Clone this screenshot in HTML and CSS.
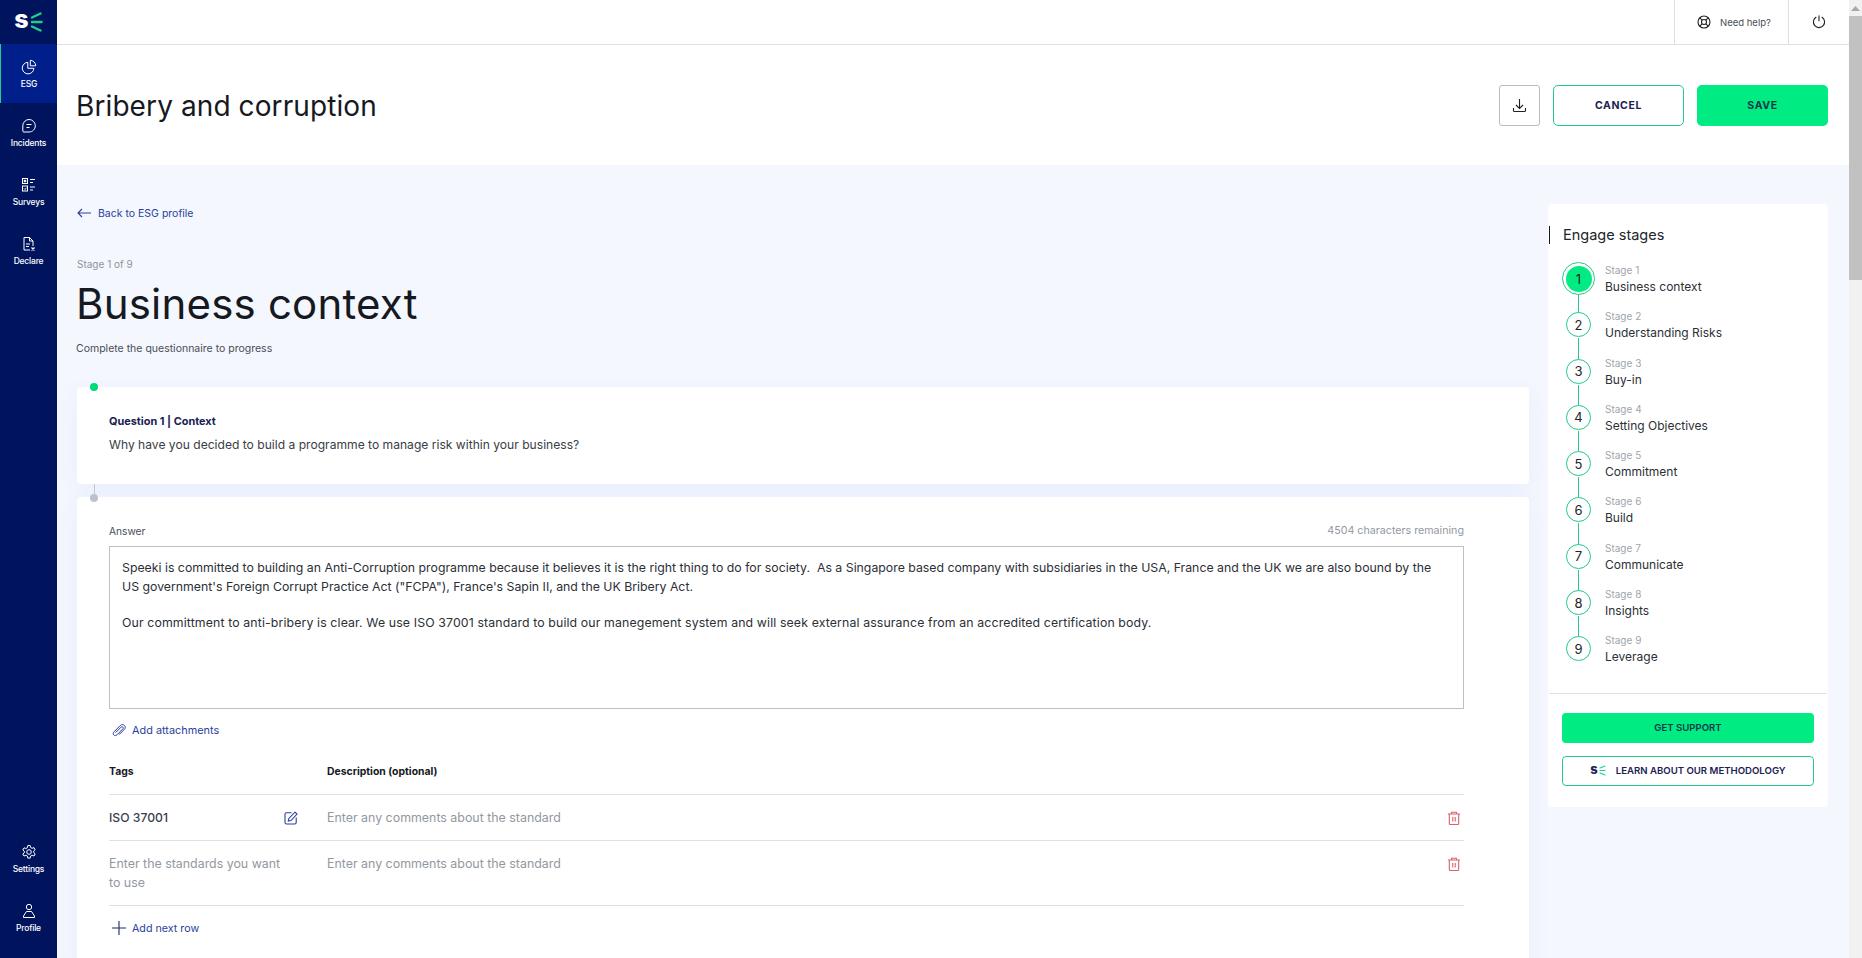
FILE: index.html
```html
<!DOCTYPE html>
<html lang="en">
<head>
<meta charset="utf-8">
<title>Bribery and corruption</title>
<link rel="stylesheet" href="styles.css">
</head>
<body>
<nav class="sidebar">
  <div class="logo">
    <span class="logo-s">s</span>
    <svg class="logo-rays" width="13" height="20" viewBox="0 0 13 20" fill="none" stroke="#1fd08c" stroke-width="2.400" stroke-linecap="round"><path d="M2 5.500 10.500 1.500M2 10h9.500M2 14.500 10.500 18.500"/></svg>
  </div>
  <a class="nav-item active">
    <svg class="nav-icon" width="16" height="16" viewBox="0 0 16 16" fill="none" stroke="#fff" stroke-width="1"><path d="M6.800 3.300A5.800 5.800 0 1 0 12.900 9.300H6.800Z"/><path d="M9.300 1.300A5.800 5.800 0 0 1 14.800 6.800H9.300Z"/></svg>
    <span>ESG</span>
  </a>
  <a class="nav-item">
    <svg class="nav-icon" width="16" height="16" viewBox="0 0 16 16" fill="none" stroke="#fff" stroke-width="1"><path d="M8 1.500a6.300 6.300 0 0 1 6.300 6.300c0 3.400-2.800 6.200-6.300 6.200H2.800c-.7 0-1-.5-1-1V7.800A6.300 6.300 0 0 1 8 1.500Z"/><path d="M5.500 6.500h5M5.500 9.500h3"/></svg>
    <span>Incidents</span>
  </a>
  <a class="nav-item">
    <svg class="nav-icon" width="16" height="16" viewBox="0 0 16 16" fill="none" stroke="#fff" stroke-width="1"><rect x="1.500" y="1.500" width="5" height="5"/><rect x="1.500" y="9" width="5" height="5"/><path d="M9 2.500h5M9 5.500h3M9 10h5M9 13h3"/><rect x="3.300" y="3.300" width="1.400" height="1.400" fill="#fff"/><path d="m3 11.500 1 1 1.500-1.800"/></svg>
    <span>Surveys</span>
  </a>
  <a class="nav-item">
    <svg class="nav-icon" width="16" height="16" viewBox="0 0 16 16" fill="none" stroke="#fff" stroke-width="1"><path d="M9 14H3V1.500h5.500L12 5v5"/><path d="M8.500 1.500V5H12M5 8h4M5 10.500h3"/><path d="m10.500 11.500 3 3M13.500 11.500l-3 3" stroke-width="1.300"/></svg>
    <span>Declare</span>
  </a>
  <div class="nav-spacer"></div>
  <a class="nav-item">
    <svg class="nav-icon" width="16" height="16" viewBox="0 0 16 16" fill="none" stroke="#fff" stroke-width="1"><circle cx="8" cy="8" r="2.300"/><path d="M6.800 1.500h2.400l.4 2 1.500.8 1.900-.7 1.200 2.100-1.500 1.300v1.600l1.500 1.300-1.200 2.100-1.900-.7-1.500.8-.4 2H6.800l-.4-2-1.500-.8-1.900.7-1.200-2.100L3.300 8.800V7.200L1.800 5.900 3 3.800l1.900.7 1.500-.8Z"/></svg>
    <span>Settings</span>
  </a>
  <a class="nav-item">
    <svg class="nav-icon" width="16" height="16" viewBox="0 0 16 16" fill="none" stroke="#fff" stroke-width="1"><circle cx="8" cy="4" r="2.700"/><path d="M5.500 8.500h5l3 4.500v1.500h-11V13Z"/></svg>
    <span>Profile</span>
  </a>
</nav>

<div class="page">
  <header class="topbar">
    <div class="top-cell help">
      <svg width="14" height="14" viewBox="0 0 14 14" fill="none" stroke="#222" stroke-width="1.100"><circle cx="7" cy="7" r="6"/><circle cx="7" cy="7" r="2.500"/><path d="m2.800 2.800 2.400 2.400M11.200 2.800 8.800 5.200M2.800 11.200l2.400-2.400M11.200 11.200 8.800 8.800"/></svg>
      <span>Need help?</span>
    </div>
    <div class="top-cell power">
      <svg width="14" height="14" viewBox="0 0 14 14" fill="none" stroke="#222" stroke-width="1.100" stroke-linecap="round"><path d="M4 2.300a5.600 5.600 0 1 0 6 0M7 .8v5"/></svg>
    </div>
  </header>

  <section class="titlebar">
    <h1 class="page-title">Bribery and corruption</h1>
    <div class="actions">
      <button class="btn-icon">
        <svg width="15" height="15" viewBox="0 0 15 15" fill="none" stroke="#222" stroke-width="1.100"><path d="M7.500 1v9M4 7l3.500 3.500L11 7M1.500 10v2.500a1 1 0 0 0 1 1h10a1 1 0 0 0 1-1V10"/></svg>
      </button>
      <button class="btn btn-outline">CANCEL</button>
      <button class="btn btn-solid">SAVE</button>
    </div>
  </section>

  <main class="content">
    <div class="left">
      <a class="back">
        <svg width="14" height="10" viewBox="0 0 14 10" fill="none" stroke="#2a3f9d" stroke-width="1.100"><path d="M14 5H1M5 1 1 5l4 4"/></svg>
        <span>Back to ESG profile</span>
      </a>
      <p class="stage-count">Stage 1 of 9</p>
      <h2 class="stage-title">Business context</h2>
      <p class="stage-sub">Complete the questionnaire to progress</p>

      <article class="card question">
        <span class="dot dot-green"></span>
        <h3 class="q-label">Question 1 | Context</h3>
        <p class="q-text">Why have you decided to build a programme to manage risk within your business?</p>
        <span class="stem"></span>
      </article>

      <article class="card answer">
        <span class="dot dot-grey"></span>
        <div class="answer-head">
          <span>Answer</span>
          <span class="remaining">4504 characters remaining</span>
        </div>
        <div class="textbox">
          <p>Speeki is committed to building an Anti-Corruption programme because it believes it is the right thing to do for society.&nbsp; As a Singapore based company with subsidiaries in the USA, France and the UK we are also bound by the US government's Foreign Corrupt Practice Act ("FCPA"), France's Sapin II, and the UK Bribery Act.</p>
          <p>Our committment to anti-bribery is clear. We use ISO 37001 standard to build our manegement system and will seek external assurance from an accredited certification body.</p>
        </div>
        <a class="link attach">
          <svg width="14" height="14" viewBox="0 0 14 14" fill="none" stroke="#2a3f9d" stroke-width="1"><path d="M12.500 2.500c-1.300-1.300-3-1.200-4.200 0L2 8.800c-1 1-1.100 2.300-.2 3.200s2.200.8 3.200-.2l5.800-5.800c.6-.6.600-1.400.1-1.900s-1.300-.5-1.900.1L3.500 9.700"/><path d="M12.500 2.500c1 1 1 2.700 0 3.700L7 11.700"/></svg>
          <span>Add attachments</span>
        </a>
        <div class="tag-row tag-head">
          <span>Tags</span>
          <span>Description (optional)</span>
        </div>
        <div class="tag-row">
          <div class="tag-cell">
            <span class="tag-value">ISO 37001</span>
            <svg width="14" height="14" viewBox="0 0 14 14" fill="none" stroke="#2a3f9d" stroke-width="1.100"><path d="M7.500 1.800H2.500a1.500 1.500 0 0 0-1.500 1.500v8.200A1.500 1.500 0 0 0 2.500 13h8.200a1.500 1.500 0 0 0 1.500-1.500V6.500"/><path d="M11 1.200 13 3 7 9.500l-2.700.6.600-2.700Z"/></svg>
          </div>
          <span class="ph">Enter any comments about the standard</span>
          <svg class="trash" width="14" height="14" viewBox="0 0 14 14" fill="none" stroke="#d9606d" stroke-width="1.100"><path d="M1 3h12M4.500 3V1.200h5V3M2.300 3v9.500a1 1 0 0 0 1 1h7.400a1 1 0 0 0 1-1V3M5.800 6v4.500M8.200 6v4.500"/></svg>
        </div>
        <div class="tag-row tag-row-tall">
          <span class="ph tag-ph">Enter the standards you want to use</span>
          <span class="ph">Enter any comments about the standard</span>
          <svg class="trash" width="14" height="14" viewBox="0 0 14 14" fill="none" stroke="#d9606d" stroke-width="1.100"><path d="M1 3h12M4.500 3V1.200h5V3M2.300 3v9.500a1 1 0 0 0 1 1h7.400a1 1 0 0 0 1-1V3M5.800 6v4.500M8.200 6v4.500"/></svg>
        </div>
        <a class="link add-row">
          <svg width="14" height="14" viewBox="0 0 14 14" fill="none" stroke="#1a2a78" stroke-width="1.100"><path d="M7 0v14M0 7h14"/></svg>
          <span>Add next row</span>
        </a>
      </article>
    </div>

    <aside class="stages">
      <h3 class="stages-title">Engage stages</h3>
      <ol class="stage-list">
        <li class="stage current"><span class="num"><b>1</b></span><div><small>Stage 1</small><strong>Business context</strong></div></li>
        <li class="stage"><span class="num"><b>2</b></span><div><small>Stage 2</small><strong>Understanding Risks</strong></div></li>
        <li class="stage"><span class="num"><b>3</b></span><div><small>Stage 3</small><strong>Buy-in</strong></div></li>
        <li class="stage"><span class="num"><b>4</b></span><div><small>Stage 4</small><strong>Setting Objectives</strong></div></li>
        <li class="stage"><span class="num"><b>5</b></span><div><small>Stage 5</small><strong>Commitment</strong></div></li>
        <li class="stage"><span class="num"><b>6</b></span><div><small>Stage 6</small><strong>Build</strong></div></li>
        <li class="stage"><span class="num"><b>7</b></span><div><small>Stage 7</small><strong>Communicate</strong></div></li>
        <li class="stage"><span class="num"><b>8</b></span><div><small>Stage 8</small><strong>Insights</strong></div></li>
        <li class="stage last"><span class="num"><b>9</b></span><div><small>Stage 9</small><strong>Leverage</strong></div></li>
      </ol>
      <div class="stage-actions">
        <button class="wide wide-solid">GET SUPPORT</button>
        <button class="wide wide-outline">
          <span class="mini-s">s</span>
          <svg width="7" height="11" viewBox="0 0 7 11" fill="none" stroke="#1fd08c" stroke-width="1.200" stroke-linecap="round"><path d="M1 3 6 1M1 5.500h5M1 8l5 2"/></svg>
          <span class="wide-label">LEARN ABOUT OUR METHODOLOGY</span>
        </button>
      </div>
    </aside>
  </main>
</div>

<div class="scrollbar">
  <div class="sb-arrow"><svg width="9" height="5" viewBox="0 0 9 5"><path d="M0 5 4.500 0 9 5Z" fill="#a8a8a8"/></svg></div>
  <div class="sb-thumb"></div>
</div>
</body>
</html>
```
FILE: styles.css
```css
* { box-sizing: border-box; }
html, body { height: 100%; }
body {
  margin: 0;
  height: 958px;
  overflow: hidden;
  display: flex;
  font-family: "Inter", "Noto Sans", sans-serif;
  color: #16191f;
  background: #f4f7fe;
}
h1, h2, h3, p, ol { margin: 0; padding: 0; }
button { font-family: inherit; cursor: pointer; }

/* sidebar */
.sidebar {
  width: 57px;
  flex: none;
  background: #00145e;
  display: flex;
  flex-direction: column;
  color: #fff;
  padding-bottom: 11px;
}
.logo {
  height: 44px;
  display: flex;
  align-items: center;
  justify-content: center;
  gap: 1px;
}
.logo-s {
  font-size: 25px;
  font-weight: 800;
  line-height: 1;
  margin-top: -5px;
}
.nav-item {
  height: 59px;
  display: flex;
  flex-direction: column;
  align-items: center;
  justify-content: center;
  gap: 4px;
  font-size: 8.500px;
  font-weight: 500;
  letter-spacing: -.2px;
}
.nav-item.active {
  background: #001f8a;
  border-left: 1px solid #1fd08c;
}
.nav-spacer { flex: 1; margin-top: 1px; }
.nav-icon { display: block; }

/* page column */
.page { flex: 1; min-width: 0; display: flex; flex-direction: column; }
.topbar {
  height: 45px;
  flex: none;
  background: #fff;
  border-bottom: 1px solid #dfe0e3;
  display: flex;
  justify-content: flex-end;
}
.top-cell {
  display: flex;
  align-items: center;
  border-left: 1px solid #dfe0e3;
  font-size: 9.500px;
  color: #4a4d55;
}
.help { width: 114px; padding-left: 22px; gap: 9px; }
.power { width: 61px; padding-left: 23px; }

.titlebar {
  height: 120px;
  flex: none;
  background: #fff;
  display: flex;
  align-items: center;
  justify-content: space-between;
  padding: 0 21px 0 19px;
}
.page-title { font-size: 28px; font-weight: 400; letter-spacing: .1px; margin-top: 2px; }
.actions { display: flex; gap: 13px; margin-top: 1px; }
.btn-icon {
  width: 41px; height: 41px;
  background: #fff;
  border: 1px solid #b9bbc0;
  border-radius: 3px;
  display: flex; align-items: center; justify-content: center;
  padding: 0;
}
.btn {
  width: 131px; height: 41px;
  border-radius: 5px;
  font-size: 10.500px;
  font-weight: 700;
  letter-spacing: .6px;
  color: #1a2254;
}
.btn-outline { background: #fff; border: 1px solid #25c98a; }
.btn-solid { background: #00eb82; border: 0; color: #10394a; }

/* content */
.content {
  flex: 1;
  min-height: 0;
  display: flex;
  gap: 19px;
  padding: 0 21px 0 20px;
}
.left { width: 1452px; flex: none; }
.back {
  display: flex;
  align-items: center;
  gap: 7px;
  margin-top: 41px;
  height: 14px;
  font-size: 10.500px;
  color: #2a3f9d;
}
.stage-count { margin-top: 37px; font-size: 10px; line-height: 14px; color: #8f949c; }
.stage-title { margin-top: 8px; margin-left: -1px; font-size: 42px; line-height: 50px; font-weight: 400; letter-spacing: .2px; }
.stage-sub { margin-top: 13px; margin-left: -1px; font-size: 10.500px; line-height: 14px; color: #4a4d55; }

.card {
  position: relative;
  background: #fff;
  border-radius: 4px;
  padding-left: 32px;
  padding-right: 65px;
  box-shadow: 0 6px 24px rgba(70, 90, 235, .06);
}
.question { margin-top: 31px; height: 97px; padding-top: 27px; }
.q-label { font-size: 10.900px; line-height: 14px; font-weight: 700; color: #1a2254; }
.q-text { margin-top: 8px; font-size: 12.100px; line-height: 18px; color: #3a3d45; }
.dot {
  position: absolute;
  left: 13px;
  width: 8px; height: 8px;
  border-radius: 50%;
}
.dot-green { top: -4px; background: #00d97a; }
.dot-grey { top: -3px; background: #bcc1d0; }
.stem {
  position: absolute;
  left: 16.500px; top: 97px;
  width: 1px; height: 12px;
  background: #c3c7d3;
}
.answer { margin-top: 13px; height: 480px; padding-top: 27px; }
.answer-head {
  display: flex;
  justify-content: space-between;
  font-size: 10.200px;
  line-height: 14px;
  color: #4a4d55;
}
.remaining { color: #9298a0; font-size: 10.700px; }
.textbox {
  margin-top: 8px;
  height: 163px;
  border: 1px solid #bdbfc3;
  padding: 12px 12px 0;
  font-size: 12.300px;
  line-height: 18.500px;
  color: #2c2f36;
}
.textbox p + p { margin-top: 18px; letter-spacing: .13px; }
.link {
  display: flex;
  align-items: center;
  gap: 6px;
  padding-left: 3px;
  font-size: 10.700px;
  color: #2a3f9d;
  height: 14px;
}
.attach { margin-top: 14px; font-size: 10.900px; }
.tag-row {
  display: grid;
  grid-template-columns: 218px 1fr 14px;
  align-items: start;
  padding: 13px 3px 13px 0;
  border-bottom: 1px solid #dfe0e3;
  font-size: 12.400px;
  line-height: 19px;
  height: 46px;
}
.tag-row-tall { height: 65px; }
.tag-head {
  margin-top: 13px;
  height: 45px;
  padding-top: 15px;
  font-size: 10.400px;
  line-height: 14px;
  font-weight: 700;
  color: #16191f;
}
.tag-cell { display: flex; justify-content: space-between; align-items: center; padding-right: 29px; height: 19px; }
.tag-value { font-size: 12.200px; font-weight: 500; color: #3a3d50; }
.ph { color: #9298a0; }
.tag-ph { padding-right: 34px; }
.trash { margin-top: 3px; }
.add-row { margin-top: 15px; }

/* stages panel */
.stages {
  width: 280px;
  flex: none;
  height: 603px;
  margin-top: 39px;
  background: #fff;
  border-radius: 4px;
  padding-top: 22px;
}
.stages-title {
  margin-left: 1px;
  padding-left: 13px;
  border-left: 1px solid #16191f;
  font-size: 14.500px;
  line-height: 18px;
  font-weight: 400;
  color: #22252b;
}
.stage-list { list-style: none; margin: 18px 0 0 14px; }
.stage {
  position: relative;
  display: flex;
  align-items: flex-start;
  height: 46.300px;
  gap: 10px;
}
.stage::before {
  content: "";
  position: absolute;
  left: 16px; top: 30px;
  width: 1px; height: 30px;
  background: #25c98a;
}
.stage.last::before { display: none; }
.num {
  position: relative;
  flex: none;
  width: 33px; height: 33px;
  display: flex; align-items: center; justify-content: center;
}
.num b {
  width: 25px; height: 25px;
  border-radius: 50%;
  border: 1px solid #25c98a;
  background: #fff;
  display: flex; align-items: center; justify-content: center;
  font-size: 13px;
  font-weight: 400;
  color: #22252b;
}
.current .num { border: 1px solid #25c98a; border-radius: 50%; background: #fff; }
.current .num b { width: 26px; height: 26px; border: 0; background: #00eb82; }
.stage div { margin-top: 1px; }
.stage small { display: block; font-size: 10px; line-height: 14px; color: #a0a5ac; }
.stage strong { display: block; margin-top: 1px; font-size: 12px; line-height: 18px; font-weight: 400; color: #2c2f36; }

.stage-actions {
  margin: 14px 1px 0;
  border-top: 1px solid #dfe0e3;
  padding: 19px 13px 0;
  display: flex;
  flex-direction: column;
  gap: 13px;
}
.wide {
  height: 30px;
  border-radius: 4px;
  font-size: 9.600px;
  font-weight: 600;
  display: flex; align-items: center; justify-content: center;
}
.wide-solid { background: #00eb82; border: 0; color: #10394a; }
.wide-outline { background: #fff; border: 1px solid #25c98a; color: #1a2254; }
.mini-s { font-size: 13px; font-weight: 800; line-height: 1; margin-top: -3px; margin-right: 1px; }
.wide-label { margin-left: 10px; }

/* scrollbar */
.scrollbar { width: 13px; flex: none; background: #f1f1f1; display: flex; flex-direction: column; }
.sb-arrow { height: 16px; display: flex; align-items: center; justify-content: center; }
.sb-thumb { height: 264px; background: #c1c1c1; }
```
